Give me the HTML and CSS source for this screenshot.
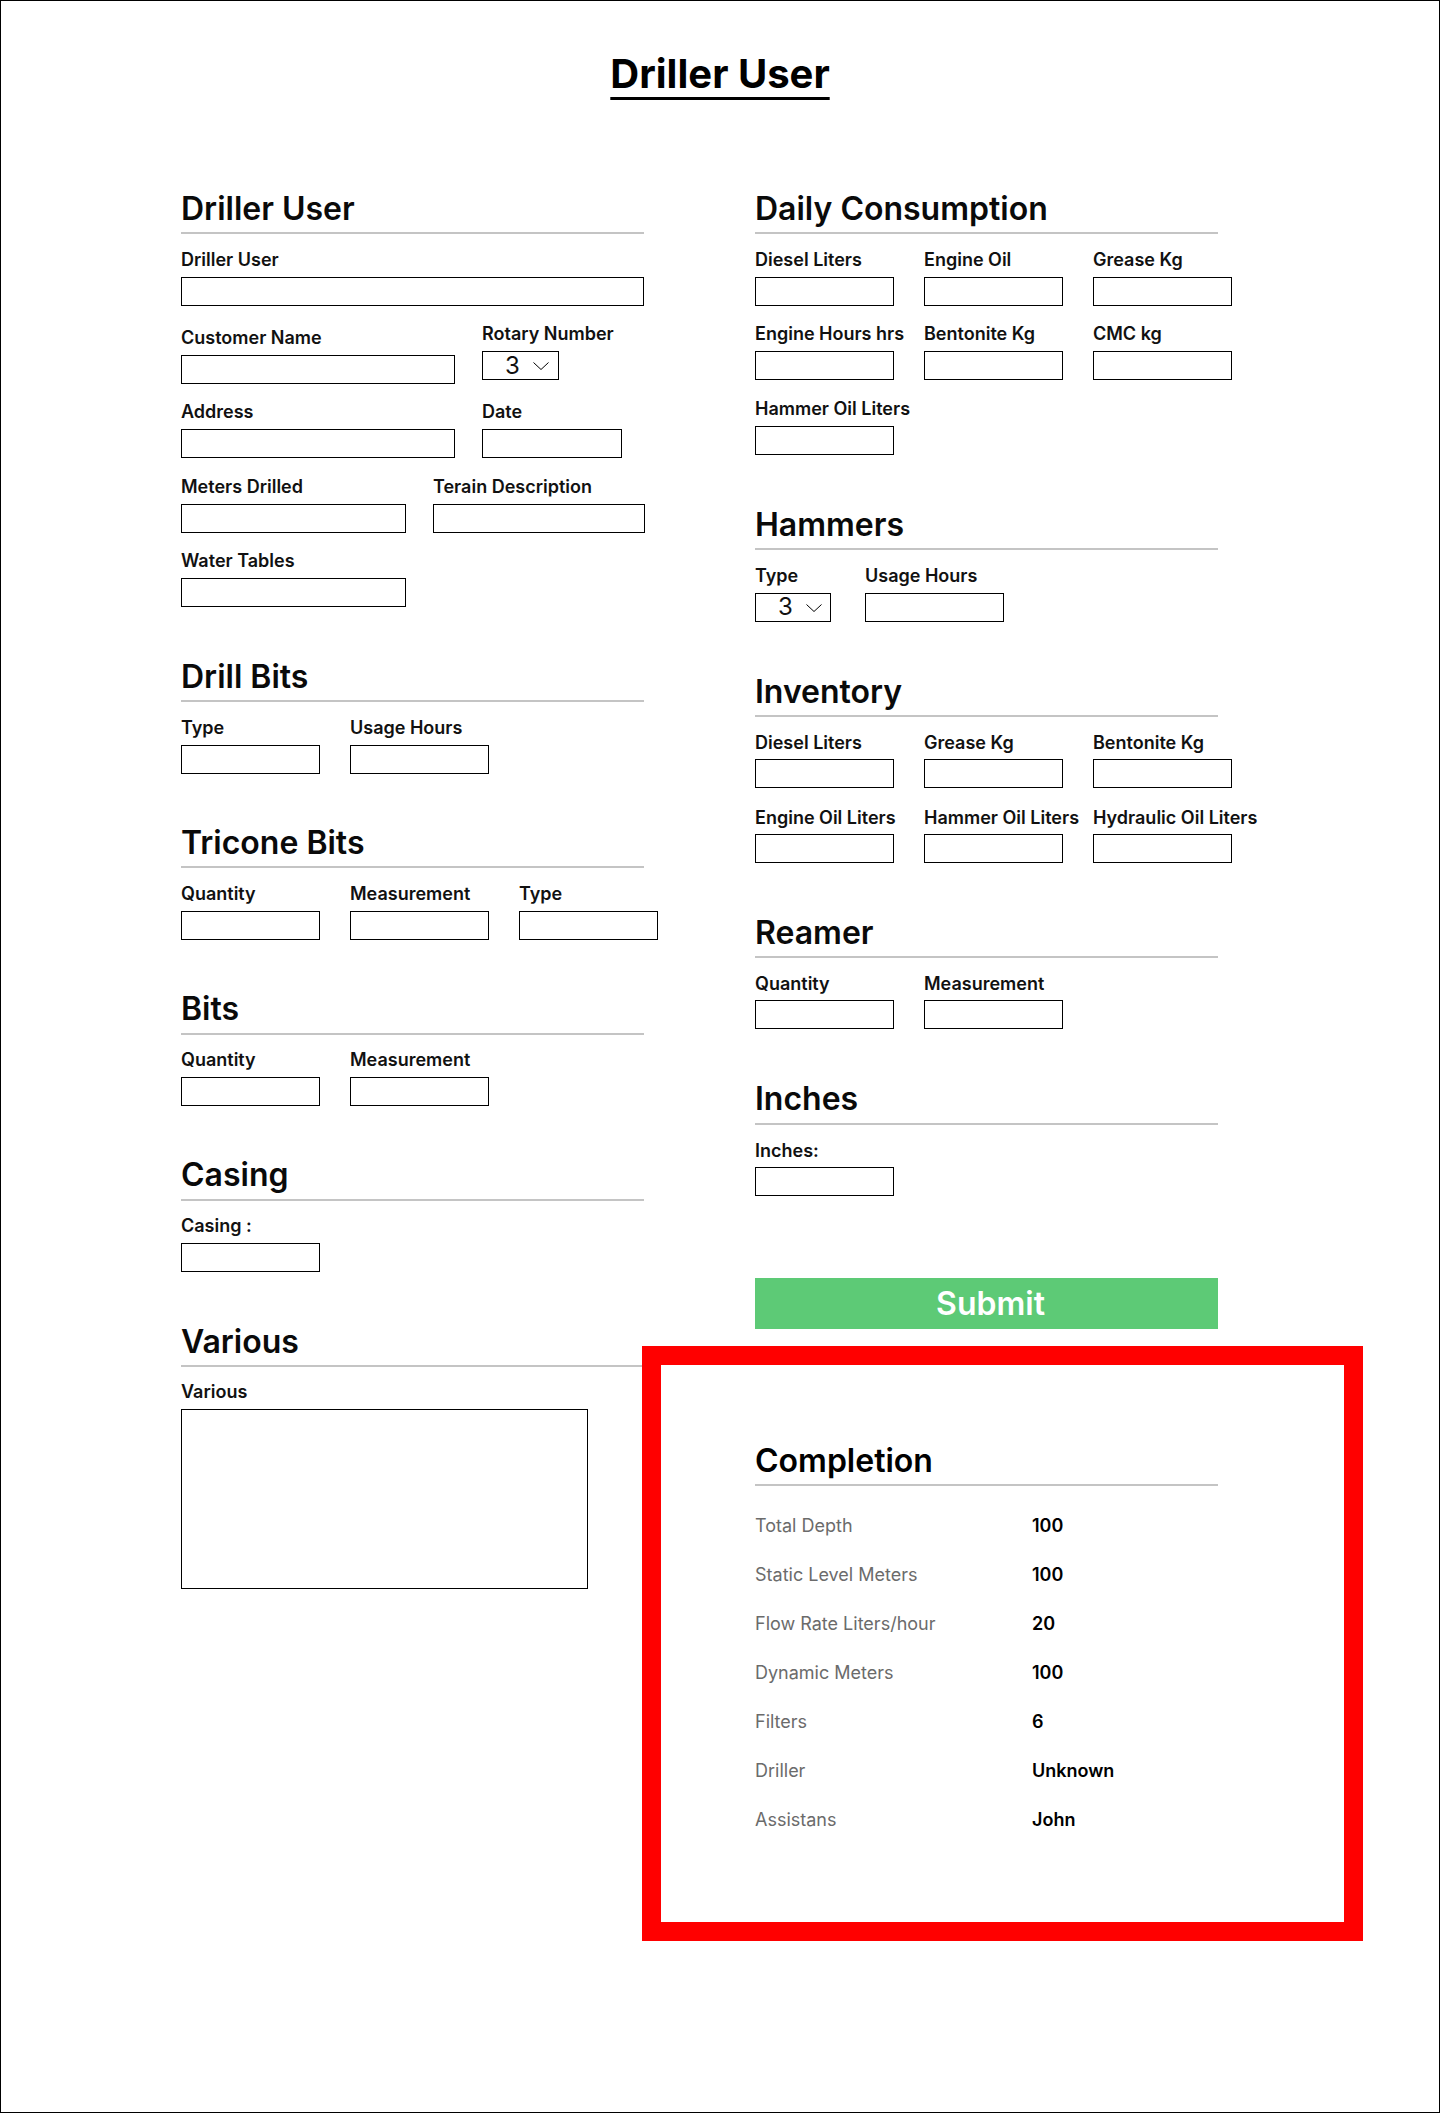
FILE: index.html
```html
<!DOCTYPE html>
<html lang="en">
<head>
<meta charset="utf-8">
<title>Driller User</title>
<link rel="stylesheet" href="styles.css">
</head>
<body>
<div class="page">
  <h1 class="title">Driller User</h1>
  <div class="columns">
    <div class="col col-left">
      <section class="section">
        <h2 class="sec-title">Driller User</h2>
        <div class="fields">
          <div class="row">
            <div class="field w-463"><label>Driller User</label><input class="input" type="text"></div>
          </div>
          <div class="row gap-27">
            <div class="field w-274 pad3"><label>Customer Name</label><input class="input" type="text"></div>
            <div class="field w-77"><label>Rotary Number</label>
              <div class="select"><span class="sel-val">3</span><svg class="chev" width="16" height="8" viewBox="0 0 16 8"><polyline points="0.5,0.5 8,7.5 15.5,0.5" fill="none" stroke="#000" stroke-width="1"/></svg></div>
            </div>
          </div>
          <div class="row gap-27">
            <div class="field w-274"><label>Address</label><input class="input" type="text"></div>
            <div class="field w-140"><label>Date</label><input class="input" type="text"></div>
          </div>
          <div class="row gap-27">
            <div class="field w-225"><label>Meters Drilled</label><input class="input" type="text"></div>
            <div class="field w-212"><label>Terain Description</label><input class="input" type="text"></div>
          </div>
          <div class="row">
            <div class="field w-225"><label>Water Tables</label><input class="input" type="text"></div>
          </div>
        </div>
      </section>

      <section class="section">
        <h2 class="sec-title">Drill Bits</h2>
        <div class="fields">
          <div class="row gap-30">
            <div class="field w-139"><label>Type</label><input class="input" type="text"></div>
            <div class="field w-139"><label>Usage Hours</label><input class="input" type="text"></div>
          </div>
        </div>
      </section>

      <section class="section">
        <h2 class="sec-title">Tricone Bits</h2>
        <div class="fields">
          <div class="row gap-30">
            <div class="field w-139"><label>Quantity</label><input class="input" type="text"></div>
            <div class="field w-139"><label>Measurement</label><input class="input" type="text"></div>
            <div class="field w-139"><label>Type</label><input class="input" type="text"></div>
          </div>
        </div>
      </section>

      <section class="section">
        <h2 class="sec-title">Bits</h2>
        <div class="fields">
          <div class="row gap-30">
            <div class="field w-139"><label>Quantity</label><input class="input" type="text"></div>
            <div class="field w-139"><label>Measurement</label><input class="input" type="text"></div>
          </div>
        </div>
      </section>

      <section class="section">
        <h2 class="sec-title">Casing</h2>
        <div class="fields">
          <div class="row">
            <div class="field w-139"><label>Casing :</label><input class="input" type="text"></div>
          </div>
        </div>
      </section>

      <section class="section">
        <h2 class="sec-title">Various</h2>
        <div class="fields">
          <div class="row">
            <div class="field w-407"><label>Various</label><textarea class="textarea"></textarea></div>
          </div>
        </div>
      </section>
    </div>

    <div class="col">
      <section class="section">
        <h2 class="sec-title">Daily Consumption</h2>
        <div class="fields">
          <div class="row gap-30">
            <div class="field w-139"><label>Diesel Liters</label><input class="input" type="text"></div>
            <div class="field w-139"><label>Engine Oil</label><input class="input" type="text"></div>
            <div class="field w-139"><label>Grease Kg</label><input class="input" type="text"></div>
          </div>
          <div class="row gap-30">
            <div class="field w-139"><label>Engine Hours hrs</label><input class="input" type="text"></div>
            <div class="field w-139"><label>Bentonite Kg</label><input class="input" type="text"></div>
            <div class="field w-139"><label>CMC kg</label><input class="input" type="text"></div>
          </div>
          <div class="row">
            <div class="field w-139"><label>Hammer Oil Liters</label><input class="input" type="text"></div>
          </div>
        </div>
      </section>

      <section class="section">
        <h2 class="sec-title">Hammers</h2>
        <div class="fields">
          <div class="row gap-34">
            <div class="field w-76"><label>Type</label>
              <div class="select"><span class="sel-val">3</span><svg class="chev" width="16" height="8" viewBox="0 0 16 8"><polyline points="0.5,0.5 8,7.5 15.5,0.5" fill="none" stroke="#000" stroke-width="1"/></svg></div>
            </div>
            <div class="field w-139"><label>Usage Hours</label><input class="input" type="text"></div>
          </div>
        </div>
      </section>

      <section class="section">
        <h2 class="sec-title">Inventory</h2>
        <div class="fields small">
          <div class="row gap-30">
            <div class="field w-139"><label>Diesel Liters</label><input class="input" type="text"></div>
            <div class="field w-139"><label>Grease Kg</label><input class="input" type="text"></div>
            <div class="field w-139"><label>Bentonite Kg</label><input class="input" type="text"></div>
          </div>
          <div class="row gap-30">
            <div class="field w-139"><label>Engine Oil Liters</label><input class="input" type="text"></div>
            <div class="field w-139"><label>Hammer Oil Liters</label><input class="input" type="text"></div>
            <div class="field w-139"><label>Hydraulic Oil Liters</label><input class="input" type="text"></div>
          </div>
        </div>
      </section>

      <section class="section">
        <h2 class="sec-title">Reamer</h2>
        <div class="fields small">
          <div class="row gap-30">
            <div class="field w-139"><label>Quantity</label><input class="input" type="text"></div>
            <div class="field w-139"><label>Measurement</label><input class="input" type="text"></div>
          </div>
        </div>
      </section>

      <section class="section">
        <h2 class="sec-title">Inches</h2>
        <div class="fields small">
          <div class="row">
            <div class="field w-139"><label>Inches:</label><input class="input" type="text"></div>
          </div>
        </div>
      </section>

      <button class="submit" type="button">Submit</button>

      <section class="completion">
        <div class="highlight"></div>
        <h2 class="sec-title">Completion</h2>
        <dl class="stats">
          <dt>Total Depth</dt><dd>100</dd>
          <dt>Static Level Meters</dt><dd>100</dd>
          <dt>Flow Rate Liters/hour</dt><dd>20</dd>
          <dt>Dynamic Meters</dt><dd>100</dd>
          <dt>Filters</dt><dd>6</dd>
          <dt>Driller</dt><dd>Unknown</dd>
          <dt>Assistans</dt><dd>John</dd>
        </dl>
      </section>
    </div>
  </div>
</div>
</body>
</html>
```

FILE: styles.css
```css
html, body {
  margin: 0;
  padding: 0;
  background: #ffffff;
}

.page {
  box-sizing: border-box;
  width: 1440px;
  height: 2113px;
  border: 1px solid #000000;
  padding-top: 49px;
  font-family: "Inter", "Noto Sans", sans-serif;
  color: #111111;
  overflow: hidden;
}

.title {
  margin: 0;
  text-align: center;
  font-size: 40px;
  font-weight: 700;
  line-height: 48px;
  color: #000000;
  text-decoration: underline;
  text-decoration-thickness: 3px;
  text-underline-offset: 9px;
}

.columns {
  display: grid;
  grid-template-columns: 463px 463px;
  column-gap: 111px;
  padding-left: 180px;
  margin-top: 92px;
  align-items: start;
}

.col {
  display: flex;
  flex-direction: column;
}

.section + .section {
  margin-top: 51px;
}

.col-left .section + .section {
  margin-top: 50.3px;
}

.sec-title {
  margin: 0;
  font-size: 32px;
  font-weight: 600;
  line-height: 38.4px;
  color: #0a0a0a;
  padding-bottom: 4px;
  border-bottom: 2px solid #c4c4c4;
}

.fields {
  padding-top: 14.5px;
  display: flex;
  flex-direction: column;
  gap: 17.5px;
}

.fields.small {
  padding-top: 15px;
  gap: 18.5px;
}

.row {
  display: flex;
  align-items: flex-start;
}

.gap-27 { gap: 27px; }
.gap-30 { gap: 30px; }
.gap-34 { gap: 34px; }

.field {
  display: flex;
  flex-direction: column;
  flex: none;
}

.field.pad3 {
  padding-top: 3.5px;
}

.field label {
  display: block;
  font-size: 18px;
  font-weight: 600;
  line-height: 22px;
  margin-bottom: 6px;
  white-space: nowrap;
}

.fields.small .field label {
  margin-bottom: 5px;
}

.input {
  display: block;
  box-sizing: border-box;
  width: 100%;
  height: 29px;
  margin: 0;
  padding: 0 6px;
  border: 1px solid #000000;
  border-radius: 0;
  background: #ffffff;
  font: inherit;
  font-size: 16px;
  outline: none;
}

.w-463 { width: 463px; }
.w-407 { width: 407px; }
.w-274 { width: 274px; }
.w-225 { width: 225px; }
.w-212 { width: 212px; }
.w-140 { width: 140px; }
.w-139 { width: 139px; }
.w-77 { width: 77px; }
.w-76 { width: 76px; }

.select {
  box-sizing: border-box;
  width: 100%;
  height: 29px;
  border: 1px solid #000000;
  display: flex;
  align-items: center;
  padding-left: 22px;
  gap: 13px;
}

.sel-val {
  font-size: 24px;
  font-weight: 400;
  line-height: 1;
  color: #111111;
}

.chev {
  display: block;
  flex: none;
  margin-top: 1px;
}

.textarea {
  display: block;
  box-sizing: border-box;
  width: 100%;
  height: 180px;
  margin: 0;
  padding: 4px;
  border: 1px solid #000000;
  border-radius: 0;
  resize: none;
  font: inherit;
  outline: none;
}

.submit {
  display: block;
  margin: 82.5px 0 0 0;
  width: 463px;
  height: 51px;
  border: none;
  border-radius: 0;
  background: #5dca76;
  color: #ffffff;
  font-family: "Inter", "Noto Sans", sans-serif;
  font-size: 32px;
  font-weight: 600;
  line-height: 51px;
  padding: 0 0 0 8px;
  cursor: pointer;
}

.completion {
  position: relative;
  margin-top: 112.5px;
}

.completion .sec-title {
  color: #000000;
}

.highlight {
  position: absolute;
  top: -96px;
  left: -113px;
  width: 721px;
  height: 595px;
  box-sizing: border-box;
  border: 19px solid #ff0000;
  pointer-events: none;
  z-index: 2;
}

.stats {
  margin: 0;
  padding-top: 29px;
  display: grid;
  grid-template-columns: 277px auto;
  row-gap: 27px;
  font-size: 18px;
  line-height: 22px;
}

.stats dt {
  margin: 0;
  color: #6b6b6b;
  font-weight: 400;
}

.stats dd {
  margin: 0;
  color: #000000;
  font-weight: 600;
}
```
